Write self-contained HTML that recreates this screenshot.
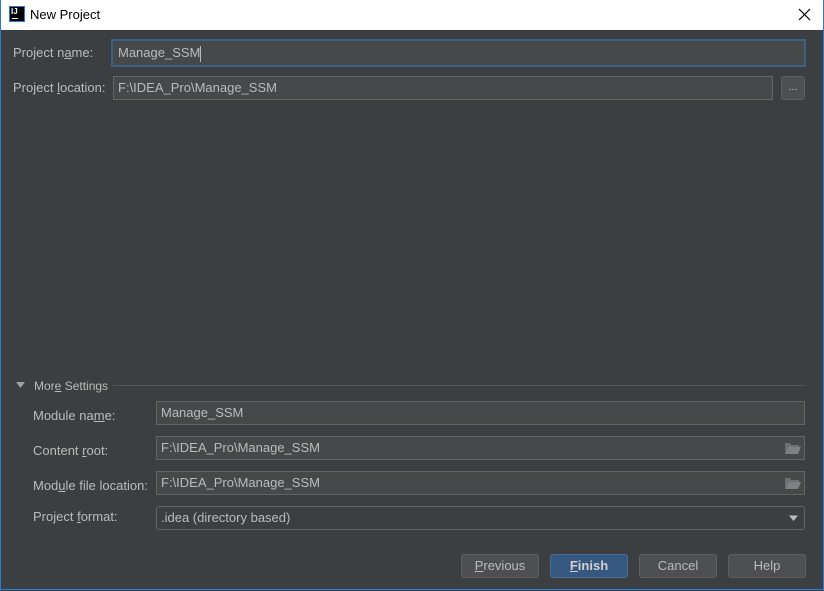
<!DOCTYPE html>
<html><head><meta charset="utf-8"><style>
*{margin:0;padding:0;box-sizing:border-box}
body{width:824px;height:591px;background:#3c3f41;position:relative;overflow:hidden;font-family:"Liberation Sans","Noto Sans CJK SC",sans-serif;font-size:13px;color:#bbbbbb}
.abs{position:absolute}
.title{left:0;top:0;width:824px;height:30px;background:#fff;color:#000}
.frame{left:0;top:0;width:824px;height:590px;border:1px solid #2b7bd6;border-top:none}
.lbl{position:absolute;line-height:16px;white-space:nowrap}
.inp{position:absolute;background:#45494a;border:1px solid #646464;height:24px;line-height:22px;padding-left:4px;color:#bbbbbb;white-space:nowrap}
.btn{position:absolute;top:554px;width:78px;height:24px;border:1px solid #5e6060;border-radius:3px;background:#4c5052;text-align:center;line-height:22px;color:#bbbbbb}
u{text-decoration:underline}
</style></head><body>
<div class="abs title">
  <div class="abs" style="left:9px;top:6px;width:16px;height:16px;background:#000;border:1px solid #2a78d6"></div>
  <div class="abs" style="left:11px;top:7px;font-size:8px;font-weight:bold;color:#fff;line-height:10px">IJ</div>
  <div class="abs" style="left:12px;top:18px;width:6px;height:1px;background:#fff"></div>
  <div class="abs" style="left:30px;top:7px;font-size:13px;line-height:16px">New Project</div>
  <svg class="abs" style="left:798px;top:8px" width="13" height="13"><path d="M1 1L12 12M12 1L1 12" stroke="#000" stroke-width="1.2"/></svg>
</div>
<div class="abs frame"></div>

<div class="lbl" style="left:13px;top:45px">Project n<u>a</u>me:</div>
<div class="inp" style="left:111px;top:39px;width:695px;height:28px;border:2px solid #3d6185;line-height:24px;padding-left:5px;color:#bbbbbb">Manage_SSM<span style="display:inline-block;width:1px;height:16px;background:#bbb;vertical-align:middle"></span></div>

<div class="lbl" style="left:13px;top:80px">Project <u>l</u>ocation:</div>
<div class="inp" style="left:113px;top:76px;width:660px">F:\IDEA_Pro\Manage_SSM</div>
<div class="abs" style="left:781px;top:76px;width:24px;height:24px;border:1px solid #5e6060;border-radius:3px;background:#4c5052;text-align:center;line-height:20px;font-size:11px">...</div>

<svg class="abs" style="left:16px;top:381px" width="10" height="8"><path d="M0 1L9 1L4.5 7Z" fill="#a0a0a0"/></svg>
<div class="lbl" style="left:34px;top:378px;font-size:12px">Mor<u>e</u> Settings</div>
<div class="abs" style="left:113px;top:385px;width:692px;height:1px;background:#555555"></div>

<div class="lbl" style="left:33px;top:408px">Module na<u>m</u>e:</div>
<div class="inp" style="left:156px;top:401px;width:649px">Manage_SSM</div>

<div class="lbl" style="left:33px;top:443px">Content <u>r</u>oot:</div>
<div class="inp" style="left:156px;top:436px;width:649px">F:\IDEA_Pro\Manage_SSM</div>
<svg class="abs" style="left:785px;top:442px" width="16" height="12"><path d="M0 1h5l1 2h8v2H3L0 11Z" fill="#6e7173"/><path d="M3 5h13l-3 7H0Z" fill="#7d8183"/></svg>

<div class="lbl" style="left:33px;top:478px">Mod<u>u</u>le file location:</div>
<div class="inp" style="left:156px;top:471px;width:649px">F:\IDEA_Pro\Manage_SSM</div>
<svg class="abs" style="left:785px;top:477px" width="16" height="12"><path d="M0 1h5l1 2h8v2H3L0 11Z" fill="#6e7173"/><path d="M3 5h13l-3 7H0Z" fill="#7d8183"/></svg>

<div class="lbl" style="left:33px;top:509px">Project <u>f</u>ormat:</div>
<div class="inp" style="left:156px;top:506px;width:649px;border-radius:3px;background:#3c3f41">.idea (directory based)</div>
<svg class="abs" style="left:789px;top:515px" width="10" height="7"><path d="M0 0.5L9 0.5L4.5 6Z" fill="#bbbbbb"/></svg>

<div class="btn" style="left:461px"><u>P</u>revious</div>
<div class="btn" style="left:550px;background:#365880;border-color:#4b6d93;font-weight:bold;color:#d0d0d0"><u>F</u>inish</div>
<div class="btn" style="left:639px">Cancel</div>
<div class="btn" style="left:728px">Help</div>
</body></html>
